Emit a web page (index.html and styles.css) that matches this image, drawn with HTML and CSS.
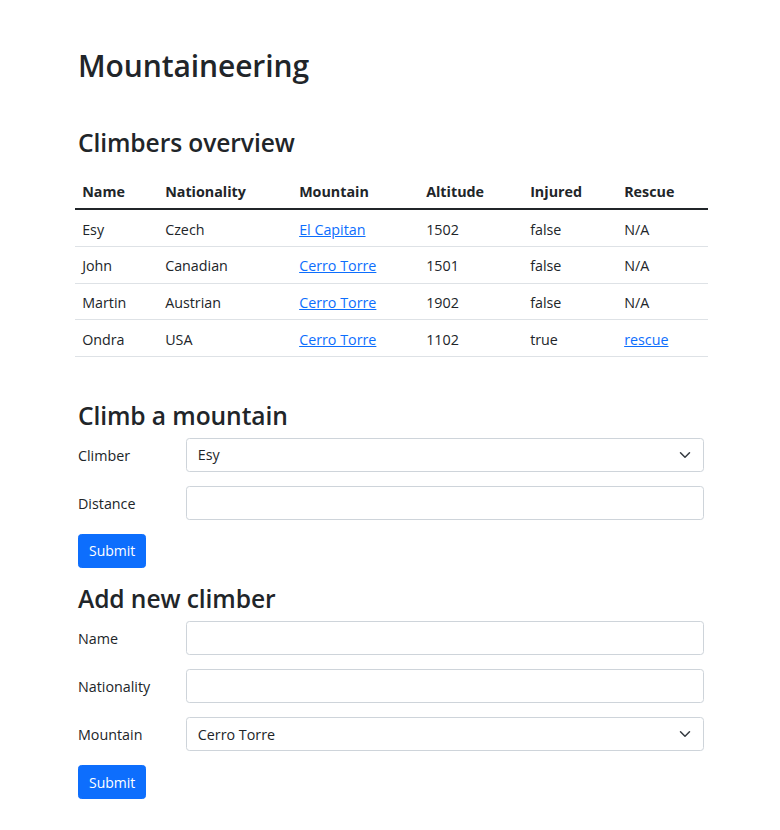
FILE: index.html
```html
<!DOCTYPE html>
<html lang="en">
<head>
<meta charset="utf-8">
<title>Mountaineering</title>
<link rel="stylesheet" href="styles.css">
</head>
<body>
<main class="container">
  <h1 class="title">Mountaineering</h1>

  <h2 class="section-title first">Climbers overview</h2>
  <table class="table">
    <thead>
      <tr>
        <th class="c-name">Name</th>
        <th class="c-nat">Nationality</th>
        <th class="c-mnt">Mountain</th>
        <th class="c-alt">Altitude</th>
        <th class="c-inj">Injured</th>
        <th class="c-res">Rescue</th>
      </tr>
    </thead>
    <tbody>
      <tr><td>Esy</td><td>Czech</td><td><a href="#">El Capitan</a></td><td>1502</td><td>false</td><td>N/A</td></tr>
      <tr><td>John</td><td>Canadian</td><td><a href="#">Cerro Torre</a></td><td>1501</td><td>false</td><td>N/A</td></tr>
      <tr><td>Martin</td><td>Austrian</td><td><a href="#">Cerro Torre</a></td><td>1902</td><td>false</td><td>N/A</td></tr>
      <tr><td>Ondra</td><td>USA</td><td><a href="#">Cerro Torre</a></td><td>1102</td><td>true</td><td><a href="#">rescue</a></td></tr>
    </tbody>
  </table>

  <h2 class="section-title spaced">Climb a mountain</h2>
  <form class="form">
    <div class="form-row">
      <label class="form-label" for="climber">Climber</label>
      <div class="select-wrap">
        <select id="climber" class="form-control form-select">
          <option>Esy</option>
          <option>John</option>
          <option>Martin</option>
          <option>Ondra</option>
        </select>
        <svg class="chevron" viewBox="0 0 16 16" width="12" height="12" aria-hidden="true"><path d="m2 5 6 6 6-6" fill="none" stroke="#343a40" stroke-width="2" stroke-linecap="round" stroke-linejoin="round"/></svg>
      </div>
    </div>
    <div class="form-row">
      <label class="form-label" for="distance">Distance</label>
      <input id="distance" class="form-control" type="text">
    </div>
    <div class="form-actions">
      <button type="button" class="btn">Submit</button>
    </div>
  </form>

  <h2 class="section-title">Add new climber</h2>
  <form class="form">
    <div class="form-row">
      <label class="form-label" for="name">Name</label>
      <input id="name" class="form-control" type="text">
    </div>
    <div class="form-row">
      <label class="form-label" for="nationality">Nationality</label>
      <input id="nationality" class="form-control" type="text">
    </div>
    <div class="form-row">
      <label class="form-label" for="mountain">Mountain</label>
      <div class="select-wrap">
        <select id="mountain" class="form-control form-select">
          <option>Cerro Torre</option>
          <option>El Capitan</option>
        </select>
        <svg class="chevron" viewBox="0 0 16 16" width="12" height="12" aria-hidden="true"><path d="m2 5 6 6 6-6" fill="none" stroke="#343a40" stroke-width="2" stroke-linecap="round" stroke-linejoin="round"/></svg>
      </div>
    </div>
    <div class="form-actions">
      <button type="button" class="btn">Submit</button>
    </div>
  </form>
</main>
</body>
</html>
```

FILE: styles.css
```css
* { box-sizing: border-box; }

html, body {
  margin: 0;
  background: #fff;
}

body {
  font-family: "Open Sans", "Noto Sans", sans-serif;
  font-size: 14.3px;
  line-height: 1.5;
  color: #212529;
}

.container {
  width: 626px;
  margin: 0 0 0 78px;
  padding: 47px 0 40px;
}

.title {
  margin: 0;
  font-size: 30px;
  font-weight: 600;
  line-height: 37.6px;
}

.section-title {
  margin: 0 0 7.2px;
  font-size: 24.6px;
  font-weight: 600;
  line-height: 31.1px;
}

.title,
.section-title {
  letter-spacing: -0.1px;
}

.section-title.first { margin-top: 42.5px; }
.section-title.spaced { margin-top: 42.5px; }

.table {
  width: calc(100% + 7px);
  margin: 14.3px -4px 0 -3px;
  border-collapse: collapse;
}

.table th,
.table td {
  padding: 8.4px 7.15px 5.9px;
  text-align: left;
  vertical-align: top;
  border-bottom: 1px solid #dee2e6;
}

.table th {
  font-weight: 700;
  border-bottom: 2px solid #212529;
}

.c-name { width: 83px; }
.c-nat { width: 134px; }
.c-mnt { width: 127px; }
.c-alt { width: 104px; }
.c-inj { width: 94px; }
.c-res { width: 91px; }

a {
  color: #0d6efd;
  text-decoration: underline;
}

.form-row {
  display: grid;
  grid-template-columns: 108px 1fr;
  align-items: center;
  margin-bottom: 14px;
}

.form-label {
  padding-top: 1px;
}

.form-control {
  display: block;
  width: 100%;
  height: 34px;
  padding: 5.4px 10.8px;
  font-family: inherit;
  font-size: 14.3px;
  line-height: 1.5;
  color: #212529;
  background: #fff;
  border: 1px solid #ced4da;
  border-radius: 3.4px;
  outline: none;
}

.select-wrap {
  position: relative;
}

.form-select {
  -webkit-appearance: none;
  appearance: none;
  padding-right: 32px;
}

.chevron {
  position: absolute;
  right: 13px;
  top: 50%;
  margin-top: -6px;
  pointer-events: none;
}

.form-actions {
  margin-bottom: 15.3px;
}

.btn {
  display: inline-block;
  height: 34px;
  padding: 5.4px 10px;
  font-family: inherit;
  font-size: 14px;
  line-height: 1.5;
  color: #fff;
  background: #0d6efd;
  border: 1px solid #0d6efd;
  border-radius: 3.4px;
  cursor: pointer;
}
```
